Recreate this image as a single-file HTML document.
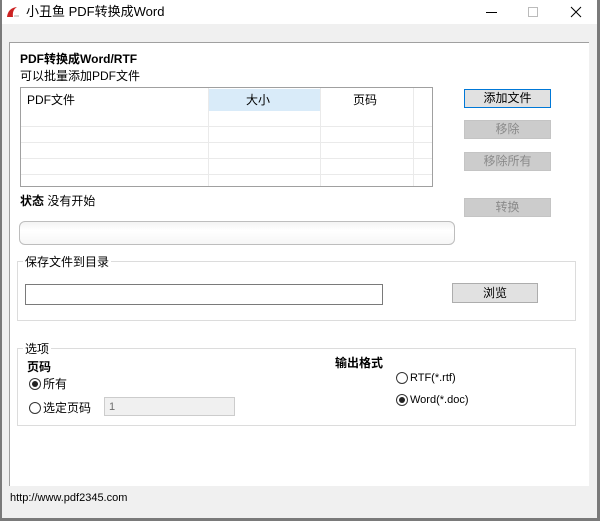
<!DOCTYPE html>
<html><head><meta charset="utf-8"><style>
*{box-sizing:border-box;margin:0;padding:0}
body{width:600px;height:521px;background:#f0f0f0;font-family:"Liberation Sans","Noto Sans CJK SC",sans-serif;font-size:12px;line-height:15px;color:#000;position:relative;overflow:hidden}
.a{position:absolute}
.btn{position:absolute;background:#cccccc;color:#8a8a8a;text-align:center;line-height:17px;font-size:12px;border:1px solid #c4c4c4}
.grp{position:absolute;border:1px solid #dcdcdc}
.lbl{position:absolute;background:#fff;padding:0 2px;font-size:12px}
.radio{position:absolute;width:12px;height:12px;border:1px solid #333;border-radius:50%;background:#fff}
.radio.on::after{content:"";position:absolute;left:2px;top:2px;width:6px;height:6px;border-radius:50%;background:#222}
</style></head><body>
<div class="a" style="left:0;top:0;width:600px;height:24px;background:#fff"></div>
<div class="a" style="left:0;top:0;width:2px;height:521px;background:#7a7a7a"></div>
<div class="a" style="right:0;top:0;width:3px;height:521px;background:#7a7a7a"></div>
<div class="a" style="left:0;bottom:0;width:600px;height:3px;background:#7a7a7a"></div>
<svg class="a" style="left:5px;top:5px" width="16" height="14"><path d="M2 12 Q3 3 12 2 Q7 5 8 12 Z" fill="#c22"/><path d="M9 11 l5 0" stroke="#aaa"/></svg>
<div class="a" style="left:26px;top:4px;font-size:13px">小丑鱼 PDF转换成Word</div>
<div class="a" style="left:486px;top:12px;width:11px;height:1px;background:#000"></div>
<div class="a" style="left:528px;top:7px;width:10px;height:10px;border:1px solid #bbb"></div>
<svg class="a" style="left:570px;top:6px" width="12" height="12"><path d="M1 1L11 11M11 1L1 11" stroke="#000" stroke-width="1"/></svg>

<div class="a" style="left:9px;top:42px;width:580px;height:444px;background:#fff;border-top:1px solid #a0a0a0;border-left:1px solid #a0a0a0"></div>

<div class="a" style="left:20px;top:52px;font-weight:bold">PDF转换成Word/RTF</div>
<div class="a" style="left:20px;top:69px">可以批量添加PDF文件</div>

<div class="a" style="left:20px;top:87px;width:413px;height:100px;border:1px solid #a0a0a0;background:#fff;overflow:hidden">
 <div class="a" style="left:187px;top:1px;width:112px;height:22px;background:#d9ebf9"></div>
 <div class="a" style="left:6px;top:5px">PDF文件</div>
 <div class="a" style="left:225px;top:5px">大小</div>
 <div class="a" style="left:332px;top:5px">页码</div>
 <div class="a" style="left:187px;top:0;width:1px;height:100px;background:#eaeaea"></div>
 <div class="a" style="left:299px;top:0;width:1px;height:100px;background:#eaeaea"></div>
 <div class="a" style="left:392px;top:0;width:1px;height:100px;background:#eaeaea"></div>
 <div class="a" style="left:0;top:38px;width:413px;height:1px;background:#eaeaea"></div>
 <div class="a" style="left:0;top:54px;width:413px;height:1px;background:#eaeaea"></div>
 <div class="a" style="left:0;top:70px;width:413px;height:1px;background:#eaeaea"></div>
 <div class="a" style="left:0;top:86px;width:413px;height:1px;background:#eaeaea"></div>
</div>

<div class="btn" style="left:464px;top:89px;width:87px;height:19px;background:#e1e1e1;border:1px solid #0078d7;color:#000">添加文件</div>
<div class="btn" style="left:464px;top:120px;width:87px;height:19px">移除</div>
<div class="btn" style="left:464px;top:152px;width:87px;height:19px">移除所有</div>
<div class="btn" style="left:464px;top:198px;width:87px;height:19px">转换</div>

<div class="a" style="left:20px;top:194px"><b>状态</b> 没有开始</div>
<div class="a" style="left:19px;top:221px;width:436px;height:24px;border:1px solid #bdbdbd;border-radius:6px;background:linear-gradient(#f3f3f3,#fff 40%,#f6f6f6)"></div>

<div class="grp" style="left:17px;top:261px;width:559px;height:60px"></div>
<div class="lbl" style="left:23px;top:255px">保存文件到目录</div>
<div class="a" style="left:25px;top:284px;width:358px;height:21px;border:1px solid #7a7a7a;background:#fff"></div>
<div class="btn" style="left:452px;top:283px;width:86px;height:20px;background:#e1e1e1;border:1px solid #adadad;color:#000;line-height:18px">浏览</div>

<div class="grp" style="left:17px;top:348px;width:559px;height:78px"></div>
<div class="lbl" style="left:23px;top:342px">选项</div>
<div class="a" style="left:27px;top:360px;font-weight:bold">页码</div>
<div class="radio on" style="left:29px;top:378px"></div>
<div class="a" style="left:43px;top:377px">所有</div>
<div class="radio" style="left:29px;top:402px"></div>
<div class="a" style="left:43px;top:401px">选定页码</div>
<div class="a" style="left:104px;top:397px;width:131px;height:19px;border:1px solid #ccc;background:#f0f0f0;color:#6d6d6d;font-size:11px;padding:2px 0 0 4px">1</div>
<div class="a" style="left:335px;top:356px;font-weight:bold">输出格式</div>
<div class="radio" style="left:396px;top:372px"></div>
<div class="a" style="left:410px;top:371px;font-size:11px">RTF(*.rtf)</div>
<div class="radio on" style="left:396px;top:394px"></div>
<div class="a" style="left:410px;top:393px;font-size:11px">Word(*.doc)</div>

<div class="a" style="left:10px;top:491px;font-size:11px">http://www.pdf2345.com</div>
</body></html>
